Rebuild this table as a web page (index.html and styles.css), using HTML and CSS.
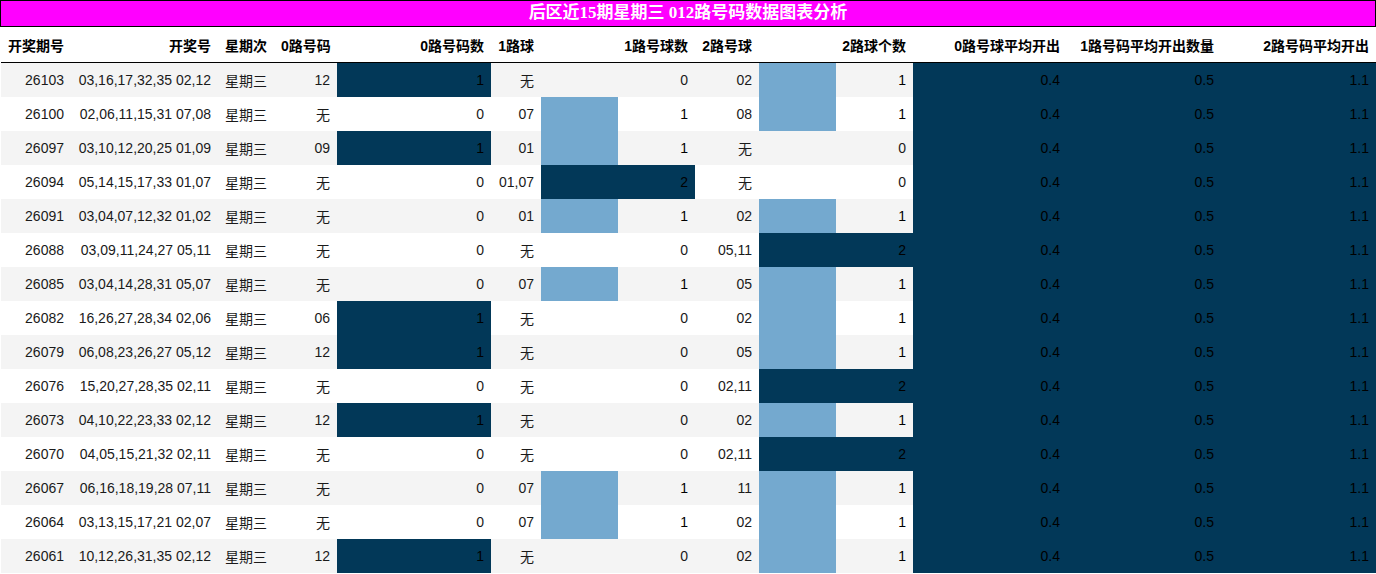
FILE: index.html
```html
<!DOCTYPE html>
<html lang="zh">
<head>
<meta charset="utf-8">
<title>后区近15期星期三 012路号码数据图表分析</title>
<link rel="stylesheet" href="styles.css">
</head>
<body>
<div class="title">后区近15期星期三 012路号码数据图表分析</div>
<table class="grid">
<colgroup>
<col class="w70"><col class="w147"><col class="w56"><col class="w63"><col class="w154"><col class="w50"><col class="w154"><col class="w64"><col class="w154"><col class="w154"><col class="w154"><col class="w155">
</colgroup>
<thead>
<tr><th>开奖期号</th><th>开奖号</th><th class="l">星期次</th><th>0路号码</th><th>0路号码数</th><th>1路球</th><th>1路号球数</th><th>2路号球</th><th>2路球个数</th><th>0路号球平均开出</th><th>1路号码平均开出数量</th><th>2路号码平均开出</th></tr>
</thead>
<tbody>
<tr><td>26103</td><td>03,16,17,32,35 02,12</td><td class="l">星期三</td><td>12</td><td class="bar dark" style="--w:100%">1</td><td>无</td><td>0</td><td>02</td><td class="bar light" style="--w:50%">1</td><td class="bar dark" style="--w:100%">0.4</td><td class="bar dark" style="--w:100%">0.5</td><td class="bar dark" style="--w:100%">1.1</td></tr>
<tr><td>26100</td><td>02,06,11,15,31 07,08</td><td class="l">星期三</td><td>无</td><td>0</td><td>07</td><td class="bar light" style="--w:50%">1</td><td>08</td><td class="bar light" style="--w:50%">1</td><td class="bar dark" style="--w:100%">0.4</td><td class="bar dark" style="--w:100%">0.5</td><td class="bar dark" style="--w:100%">1.1</td></tr>
<tr><td>26097</td><td>03,10,12,20,25 01,09</td><td class="l">星期三</td><td>09</td><td class="bar dark" style="--w:100%">1</td><td>01</td><td class="bar light" style="--w:50%">1</td><td>无</td><td>0</td><td class="bar dark" style="--w:100%">0.4</td><td class="bar dark" style="--w:100%">0.5</td><td class="bar dark" style="--w:100%">1.1</td></tr>
<tr><td>26094</td><td>05,14,15,17,33 01,07</td><td class="l">星期三</td><td>无</td><td>0</td><td>01,07</td><td class="bar dark" style="--w:100%">2</td><td>无</td><td>0</td><td class="bar dark" style="--w:100%">0.4</td><td class="bar dark" style="--w:100%">0.5</td><td class="bar dark" style="--w:100%">1.1</td></tr>
<tr><td>26091</td><td>03,04,07,12,32 01,02</td><td class="l">星期三</td><td>无</td><td>0</td><td>01</td><td class="bar light" style="--w:50%">1</td><td>02</td><td class="bar light" style="--w:50%">1</td><td class="bar dark" style="--w:100%">0.4</td><td class="bar dark" style="--w:100%">0.5</td><td class="bar dark" style="--w:100%">1.1</td></tr>
<tr><td>26088</td><td>03,09,11,24,27 05,11</td><td class="l">星期三</td><td>无</td><td>0</td><td>无</td><td>0</td><td>05,11</td><td class="bar dark" style="--w:100%">2</td><td class="bar dark" style="--w:100%">0.4</td><td class="bar dark" style="--w:100%">0.5</td><td class="bar dark" style="--w:100%">1.1</td></tr>
<tr><td>26085</td><td>03,04,14,28,31 05,07</td><td class="l">星期三</td><td>无</td><td>0</td><td>07</td><td class="bar light" style="--w:50%">1</td><td>05</td><td class="bar light" style="--w:50%">1</td><td class="bar dark" style="--w:100%">0.4</td><td class="bar dark" style="--w:100%">0.5</td><td class="bar dark" style="--w:100%">1.1</td></tr>
<tr><td>26082</td><td>16,26,27,28,34 02,06</td><td class="l">星期三</td><td>06</td><td class="bar dark" style="--w:100%">1</td><td>无</td><td>0</td><td>02</td><td class="bar light" style="--w:50%">1</td><td class="bar dark" style="--w:100%">0.4</td><td class="bar dark" style="--w:100%">0.5</td><td class="bar dark" style="--w:100%">1.1</td></tr>
<tr><td>26079</td><td>06,08,23,26,27 05,12</td><td class="l">星期三</td><td>12</td><td class="bar dark" style="--w:100%">1</td><td>无</td><td>0</td><td>05</td><td class="bar light" style="--w:50%">1</td><td class="bar dark" style="--w:100%">0.4</td><td class="bar dark" style="--w:100%">0.5</td><td class="bar dark" style="--w:100%">1.1</td></tr>
<tr><td>26076</td><td>15,20,27,28,35 02,11</td><td class="l">星期三</td><td>无</td><td>0</td><td>无</td><td>0</td><td>02,11</td><td class="bar dark" style="--w:100%">2</td><td class="bar dark" style="--w:100%">0.4</td><td class="bar dark" style="--w:100%">0.5</td><td class="bar dark" style="--w:100%">1.1</td></tr>
<tr><td>26073</td><td>04,10,22,23,33 02,12</td><td class="l">星期三</td><td>12</td><td class="bar dark" style="--w:100%">1</td><td>无</td><td>0</td><td>02</td><td class="bar light" style="--w:50%">1</td><td class="bar dark" style="--w:100%">0.4</td><td class="bar dark" style="--w:100%">0.5</td><td class="bar dark" style="--w:100%">1.1</td></tr>
<tr><td>26070</td><td>04,05,15,21,32 02,11</td><td class="l">星期三</td><td>无</td><td>0</td><td>无</td><td>0</td><td>02,11</td><td class="bar dark" style="--w:100%">2</td><td class="bar dark" style="--w:100%">0.4</td><td class="bar dark" style="--w:100%">0.5</td><td class="bar dark" style="--w:100%">1.1</td></tr>
<tr><td>26067</td><td>06,16,18,19,28 07,11</td><td class="l">星期三</td><td>无</td><td>0</td><td>07</td><td class="bar light" style="--w:50%">1</td><td>11</td><td class="bar light" style="--w:50%">1</td><td class="bar dark" style="--w:100%">0.4</td><td class="bar dark" style="--w:100%">0.5</td><td class="bar dark" style="--w:100%">1.1</td></tr>
<tr><td>26064</td><td>03,13,15,17,21 02,07</td><td class="l">星期三</td><td>无</td><td>0</td><td>07</td><td class="bar light" style="--w:50%">1</td><td>02</td><td class="bar light" style="--w:50%">1</td><td class="bar dark" style="--w:100%">0.4</td><td class="bar dark" style="--w:100%">0.5</td><td class="bar dark" style="--w:100%">1.1</td></tr>
<tr><td>26061</td><td>10,12,26,31,35 02,12</td><td class="l">星期三</td><td>12</td><td class="bar dark" style="--w:100%">1</td><td>无</td><td>0</td><td>02</td><td class="bar light" style="--w:50%">1</td><td class="bar dark" style="--w:100%">0.4</td><td class="bar dark" style="--w:100%">0.5</td><td class="bar dark" style="--w:100%">1.1</td></tr>
</tbody>
</table>
</body>
</html>
```
FILE: styles.css
```css
html, body {
  margin: 0;
  padding: 0;
  background: #fff;
}
body {
  font-family: "Liberation Sans", "Noto Sans CJK SC", sans-serif;
  font-size: 14px;
  color: #1a1a1a;
}
.title {
  box-sizing: border-box;
  width: 1376px;
  height: 27px;
  border: 1px solid #000;
  background: #ff00ff;
  color: #fff;
  font-family: "Liberation Serif", "Noto Sans CJK SC", serif;
  font-weight: bold;
  font-size: 17px;
  line-height: 24px;
  text-align: center;
}
.grid {
  margin-left: 1px;
  width: 1375px;
  table-layout: fixed;
  border-collapse: collapse;
  border-spacing: 0;
}
.w70 { width: 70px; }
.w147 { width: 147px; }
.w56 { width: 56px; }
.w63 { width: 63px; }
.w154 { width: 154px; }
.w155 { width: 155px; }
.w50 { width: 50px; }
.w64 { width: 64px; }
.grid th {
  height: 35px;
  padding: 0 7px;
  font-weight: bold;
  text-align: right;
  white-space: nowrap;
  border-bottom: 1px solid #000;
  color: #000;
}
.grid td {
  height: 34px;
  padding: 0 7px;
  text-align: right;
  white-space: nowrap;
}
.grid th.l, .grid td.l {
  text-align: left;
}
.grid tbody tr:nth-child(odd) td {
  background-color: #f4f4f4;
}
.grid tbody tr:nth-child(even) td {
  background-color: #fff;
}
.grid tbody tr td.bar {
  color: #000;
}
.grid tbody tr td.bar.dark {
  background-image: linear-gradient(to right, #023858 var(--w), transparent var(--w));
}
.grid tbody tr td.bar.light {
  background-image: linear-gradient(to right, #74a9cf var(--w), transparent var(--w));
}
```
